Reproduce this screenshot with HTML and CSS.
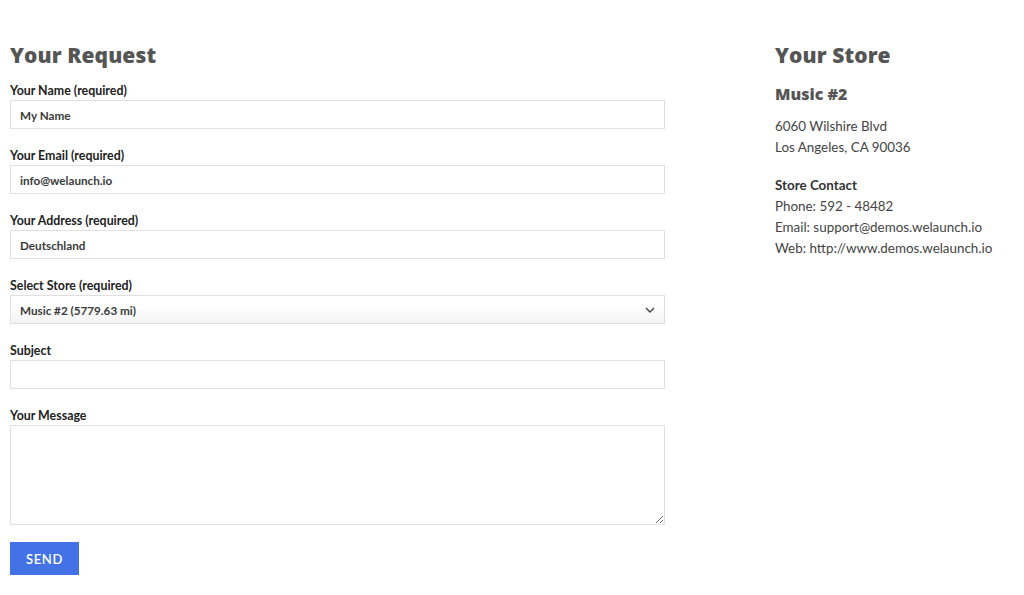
FILE: index.html
```html
<!DOCTYPE html>
<html lang="en">
<head>
  <meta charset="UTF-8">
  <meta name="viewport" content="width=device-width, initial-scale=1">
  <title>Store Request</title>
  <link rel="stylesheet" href="styles.css">
</head>
<body>

  <div class="page">
    <form class="request">
      <h2 class="title">Your Request</h2>

      <div class="field">
        <label>Your Name (required)</label>
        <input type="text" value="My Name">
      </div>
      <div class="field">
        <label>Your Email (required)</label>
        <input type="text" value="info@welaunch.io">
      </div>
      <div class="field">
        <label>Your Address (required)</label>
        <input type="text" value="Deutschland">
      </div>
      <div class="field">
        <label>Select Store (required)</label>
        <div class="select">
          <span>Music #2 (5779.63 mi)</span>
          <svg width="10" height="6" viewBox="0 0 10 6"><path d="M1 1l4 4 4-4" fill="none" stroke="#444" stroke-width="1.4"/></svg>
        </div>
      </div>
      <div class="field">
        <label>Subject</label>
        <input type="text" value="">
      </div>
      <div class="field">
        <label>Your Message</label>
        <textarea></textarea>
      </div>

      <button type="button" class="btn-send">SEND</button>
    </form>

    <div class="store">
      <h2 class="title">Your Store</h2>
      <h3 class="store-name">Music #2</h3>
      <p>6060 Wilshire Blvd<br>Los Angeles, CA 90036</p>
      <p><strong>Store Contact</strong><br>
        Phone: 592 - 48482<br>
        Email: support@demos.welaunch.io<br>
        Web: http://www.demos.welaunch.io</p>
    </div>
  </div>

</body>
</html>
```

FILE: styles.css
```css
* {
  box-sizing: border-box;
}
body {
  margin: 0;
  padding: 0;
  background: #fff;
  font-family: 'Lato', sans-serif;
  color: #333;
}
.page {
  display: grid;
  grid-template-columns: 655px 1fr;
  gap: 110px;
  padding: 42px 10px 0;
}
.title {
  margin: 0 0 15px;
  font-family: 'Open Sans', sans-serif;
  font-weight: 800;
  font-size: 21px;
  line-height: 26px;
  color: #555;
  letter-spacing: 0.1px;
}
.field {
  margin-bottom: 19px;
}
.field label {
  display: block;
  font-size: 12.4px;
  font-weight: 700;
  line-height: 15px;
  margin-bottom: 2px;
  color: #222;
}
.field input,
.field textarea,
.select {
  display: block;
  width: 100%;
  height: 29px;
  border: 1px solid #e0e0e0;
  background: #fff;
  padding: 0 9px;
  font-family: 'Lato', sans-serif;
  font-size: 11.7px;
  font-weight: 700;
  color: #3a3a3a;
  outline: none;
  margin: 0;
}
.select {
  display: flex;
  align-items: center;
  justify-content: space-between;
  background: linear-gradient(#fff 40%, #f3f3f3);
  padding-right: 9px;
}
.field textarea {
  height: 100px;
  resize: vertical;
}
.btn-send {
  display: block;
  margin-top: -2px;
  width: 69px;
  height: 33px;
  border: none;
  background: #4272e6;
  color: #fff;
  font-family: 'Lato', sans-serif;
  font-size: 13px;
  font-weight: 600;
  letter-spacing: 0.6px;
  cursor: pointer;
}
.store {
  font-size: 13.4px;
  line-height: 21px;
  color: #444;
}
.store-name {
  margin: -1px 0 10px;
  font-family: 'Open Sans', sans-serif;
  font-weight: 800;
  font-size: 16px;
  line-height: 24px;
  color: #555;
}
.store p {
  margin: 0 0 17px;
}
.store strong {
  color: #333;
}
```
